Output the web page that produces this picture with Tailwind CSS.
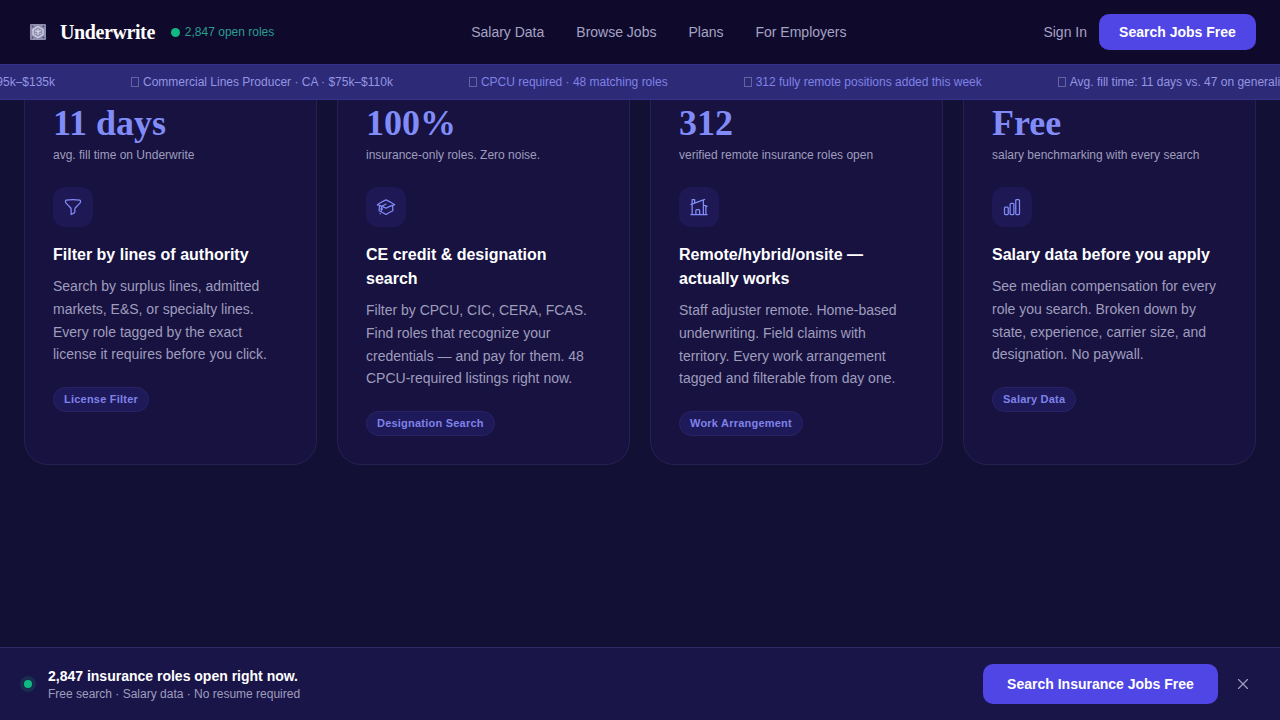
<!DOCTYPE html>
<html lang="en">
<head>
    <meta charset="UTF-8">
    <title>Underwrite</title>
    <script src="https://cdn.jsdelivr.net/npm/@tailwindcss/browser@4"></script>
</head>
<body class="bg-[#131035] font-['Liberation_Sans',sans-serif]">
    <div class="h-[720px] w-[1280px] overflow-hidden flex flex-col">
        <!-- nav -->
        <header class="relative z-20 h-16 shrink-0 bg-[#0f0a2c] flex items-center justify-between pl-[30px] pr-6">
            <div class="flex items-center">
                <svg width="16" height="16" viewBox="0 0 16 16">
                    <rect width="16" height="16" rx="1" fill="#8f8eb0"/>
                    <path d="M8 2.5 13 5.5V10.5L8 13.5 3 10.5V5.5Z M8 5V11 M5 6.5 11 9.5 M11 6.5 5 9.5" fill="none" stroke="#d4d4e4" stroke-width="1.3"/>
                    <circle cx="2.5" cy="2.5" r="1" fill="#4f4d72"/>
                    <circle cx="13.5" cy="2.5" r="1" fill="#4f4d72"/>
                    <circle cx="2.5" cy="13.5" r="1" fill="#4f4d72"/>
                    <circle cx="13.5" cy="13.5" r="1" fill="#4f4d72"/>
                </svg>
                <span class="ml-[14px] font-['Liberation_Serif',serif] font-bold text-xl tracking-[-0.4px] text-white">Underwrite</span>
                <span class="ml-[16px] w-[9px] h-[9px] rounded-full bg-[#10b981]"></span>
                <span class="ml-[5px] text-xs text-[#2a9d8f]">2,847 open roles</span>
            </div>
            <nav class="flex items-center gap-8 text-sm text-[#a5a3c4]">
                <a href="#">Salary Data</a>
                <a href="#">Browse Jobs</a>
                <a href="#">Plans</a>
                <a href="#">For Employers</a>
            </nav>
            <div class="flex items-center gap-3">
                <a href="#" class="text-sm text-[#a5a3c4]">Sign In</a>
                <button class="h-9 w-[157px] rounded-[10px] bg-[#4f46e5] text-sm font-bold text-white">Search Jobs Free</button>
            </div>
        </header>

        <!-- ticker -->
        <div class="relative z-20 h-9 shrink-0 bg-[#2d2a78] border-y border-[#35318a] flex items-center gap-[76px] overflow-hidden whitespace-nowrap text-xs">
            <div class="w-[55px] shrink-0 flex justify-end"><span class="shrink-0 text-[#9496e2]">Senior Underwriter · TX · $95k–$135k</span></div>
            <span class="shrink-0 flex items-center text-[#9496e2]"><i class="w-2 h-[10px] mr-1 border border-[#62639f]"></i>Commercial Lines Producer · CA · $75k–$110k</span>
            <span class="shrink-0 flex items-center text-[#8082e6]"><i class="w-2 h-[10px] mr-1 border border-[#62639f]"></i>CPCU required · 48 matching roles</span>
            <span class="shrink-0 flex items-center text-[#8082e6]"><i class="w-2 h-[10px] mr-1 border border-[#62639f]"></i>312 fully remote positions added this week</span>
            <span class="shrink-0 flex items-center text-[#9496e2]"><i class="w-2 h-[10px] mr-1 border border-[#62639f]"></i>Avg. fill time: 11 days vs. 47 on generalist boards</span>
        </div>

        <!-- cards -->
        <main class="relative z-10 flex-1 min-h-0 px-6">
            <div class="-mt-[26px] grid grid-cols-4 gap-5">
                <article class="rounded-[24px] border border-[#262150] bg-[#171240] p-7">
                    <div class="font-['Liberation_Serif',serif] font-bold text-4xl leading-10 text-[#818cf8]">11 days</div>
                    <p class="mt-1 text-xs text-[#9f9dbd]">avg. fill time on Underwrite</p>
                    <div class="mt-6 w-10 h-10 rounded-xl bg-[#1e1954] flex items-center justify-center">
                        <svg class="w-5 h-5 text-[#818cf8]" fill="none" viewBox="0 0 24 24" stroke="currentColor" stroke-width="1.5" stroke-linecap="round" stroke-linejoin="round"><path d="M12 3c2.755 0 5.455.232 8.083.678.533.09.917.556.917 1.096v1.044a2.25 2.25 0 0 1-.659 1.591l-5.432 5.432a2.25 2.25 0 0 0-.659 1.591v2.927a2.25 2.25 0 0 1-1.244 2.013L9.75 21v-6.568a2.25 2.25 0 0 0-.659-1.591L3.659 7.409A2.25 2.25 0 0 1 3 5.818V4.774c0-.54.384-1.006.917-1.096A48.32 48.32 0 0 1 12 3Z"/></svg>
                    </div>
                    <h3 class="mt-4 text-base font-bold text-white">Filter by lines of authority</h3>
                    <p class="mt-2 text-sm leading-[22.75px] text-[#9f9dbd]">Search by surplus lines, admitted markets, E&amp;S, or specialty lines. Every role tagged by the exact license it requires before you click.</p>
                    <span class="mt-[21px] inline-block rounded-full border border-[#282364] bg-[#1e1958] px-[10px] py-[3px] text-[11px] font-bold tracking-[0.22px] text-[#7f82e8]">License Filter</span>
                </article>

                <article class="rounded-[24px] border border-[#262150] bg-[#171240] p-7">
                    <div class="font-['Liberation_Serif',serif] font-bold text-4xl leading-10 text-[#818cf8]">100%</div>
                    <p class="mt-1 text-xs text-[#9f9dbd]">insurance-only roles. Zero noise.</p>
                    <div class="mt-6 w-10 h-10 rounded-xl bg-[#1e1954] flex items-center justify-center">
                        <svg class="w-5 h-5 text-[#818cf8]" fill="none" viewBox="0 0 24 24" stroke="currentColor" stroke-width="1.5" stroke-linecap="round" stroke-linejoin="round"><path d="M4.26 10.147a60.438 60.438 0 0 0-.491 6.347A48.62 48.62 0 0 1 12 20.904a48.62 48.62 0 0 1 8.232-4.41 60.46 60.46 0 0 0-.491-6.347m-15.482 0a50.636 50.636 0 0 0-2.658-.813A59.906 59.906 0 0 1 12 3.493a59.903 59.903 0 0 1 10.399 5.84c-.896.248-1.783.52-2.658.814m-15.482 0A50.717 50.717 0 0 1 12 13.489a50.702 50.702 0 0 1 7.74-3.342M6.75 15a.75.75 0 1 0 0-1.5.75.75 0 0 0 0 1.5Zm0 0v-3.675A55.378 55.378 0 0 1 12 8.443m-7.007 11.55A5.981 5.981 0 0 0 6.75 15.75v-1.5"/></svg>
                    </div>
                    <h3 class="mt-4 text-base font-bold text-white">CE credit &amp; designation search</h3>
                    <p class="mt-2 text-sm leading-[22.75px] text-[#9f9dbd]">Filter by CPCU, CIC, CERA, FCAS. Find roles that recognize your credentials — and pay for them. 48 CPCU-required listings right now.</p>
                    <span class="mt-[21px] inline-block rounded-full border border-[#282364] bg-[#1e1958] px-[10px] py-[3px] text-[11px] font-bold tracking-[0.22px] text-[#7f82e8]">Designation Search</span>
                </article>

                <article class="rounded-[24px] border border-[#262150] bg-[#171240] p-7">
                    <div class="font-['Liberation_Serif',serif] font-bold text-4xl leading-10 text-[#818cf8]">312</div>
                    <p class="mt-1 text-xs text-[#9f9dbd]">verified remote insurance roles open</p>
                    <div class="mt-6 w-10 h-10 rounded-xl bg-[#1e1954] flex items-center justify-center">
                        <svg class="w-5 h-5 text-[#818cf8]" fill="none" viewBox="0 0 24 24" stroke="currentColor" stroke-width="1.5" stroke-linecap="round" stroke-linejoin="round"><path d="M8.25 21v-4.875c0-.621.504-1.125 1.125-1.125h2.25c.621 0 1.125.504 1.125 1.125V21m0 0h4.5V3.545M12.75 21h7.5V10.75M2.25 21h1.5m18 0h-18M2.25 9l4.5-1.636M18.75 3l-1.5.545m0 6.205 3 1m1.5.5-1.5-.5M6.75 7.364V3h-3v18m3-13.636 10.5-3.819"/></svg>
                    </div>
                    <h3 class="mt-4 text-base font-bold text-white">Remote/hybrid/onsite — actually works</h3>
                    <p class="mt-2 text-sm leading-[22.75px] text-[#9f9dbd]">Staff adjuster remote. Home-based underwriting. Field claims with territory. Every work arrangement tagged and filterable from day one.</p>
                    <span class="mt-[21px] inline-block rounded-full border border-[#282364] bg-[#1e1958] px-[10px] py-[3px] text-[11px] font-bold tracking-[0.22px] text-[#7f82e8]">Work Arrangement</span>
                </article>

                <article class="rounded-[24px] border border-[#262150] bg-[#171240] p-7">
                    <div class="font-['Liberation_Serif',serif] font-bold text-4xl leading-10 text-[#818cf8]">Free</div>
                    <p class="mt-1 text-xs text-[#9f9dbd]">salary benchmarking with every search</p>
                    <div class="mt-6 w-10 h-10 rounded-xl bg-[#1e1954] flex items-center justify-center">
                        <svg class="w-5 h-5 text-[#818cf8]" fill="none" viewBox="0 0 24 24" stroke="currentColor" stroke-width="1.5" stroke-linecap="round" stroke-linejoin="round"><path d="M3 13.125C3 12.504 3.504 12 4.125 12h2.25c.621 0 1.125.504 1.125 1.125v6.75C7.5 20.496 6.996 21 6.375 21h-2.25A1.125 1.125 0 0 1 3 19.875v-6.75ZM9.75 8.625c0-.621.504-1.125 1.125-1.125h2.25c.621 0 1.125.504 1.125 1.125v11.25c0 .621-.504 1.125-1.125 1.125h-2.25a1.125 1.125 0 0 1-1.125-1.125V8.625ZM16.5 4.125c0-.621.504-1.125 1.125-1.125h2.25C20.496 3 21 3.504 21 4.125v15.75c0 .621-.504 1.125-1.125 1.125h-2.25a1.125 1.125 0 0 1-1.125-1.125V4.125Z"/></svg>
                    </div>
                    <h3 class="mt-4 text-base font-bold text-white">Salary data before you apply</h3>
                    <p class="mt-2 text-sm leading-[22.75px] text-[#9f9dbd]">See median compensation for every role you search. Broken down by state, experience, carrier size, and designation. No paywall.</p>
                    <span class="mt-[21px] inline-block rounded-full border border-[#282364] bg-[#1e1958] px-[10px] py-[3px] text-[11px] font-bold tracking-[0.22px] text-[#7f82e8]">Salary Data</span>
                </article>
            </div>
        </main>

        <!-- sticky bottom bar -->
        <footer class="relative z-20 h-[73px] shrink-0 bg-[#1a1548] border-t border-[#2e2a62] flex items-center pl-6 pr-7">
            <span class="w-2 h-2 rounded-full bg-[#10b981] ring-4 ring-[#10b981]/15"></span>
            <div class="ml-4 mt-[2px]">
                <p class="text-sm leading-[18px] font-bold text-white">2,847 insurance roles open right now.</p>
                <p class="text-xs leading-[18px] text-[#9f9dbd]">Free search · Salary data · No resume required</p>
            </div>
            <button class="ml-auto h-10 w-[235px] rounded-[10px] bg-[#4f46e5] text-sm font-bold text-white">Search Insurance Jobs Free</button>
            <svg class="ml-4 w-[18px] h-[18px] text-[#a5a3c4]" fill="none" viewBox="0 0 24 24" stroke="currentColor" stroke-width="1.5" stroke-linecap="round" stroke-linejoin="round"><path d="M6 18 18 6M6 6l12 12"/></svg>
        </footer>
    </div>
</body>
</html>
